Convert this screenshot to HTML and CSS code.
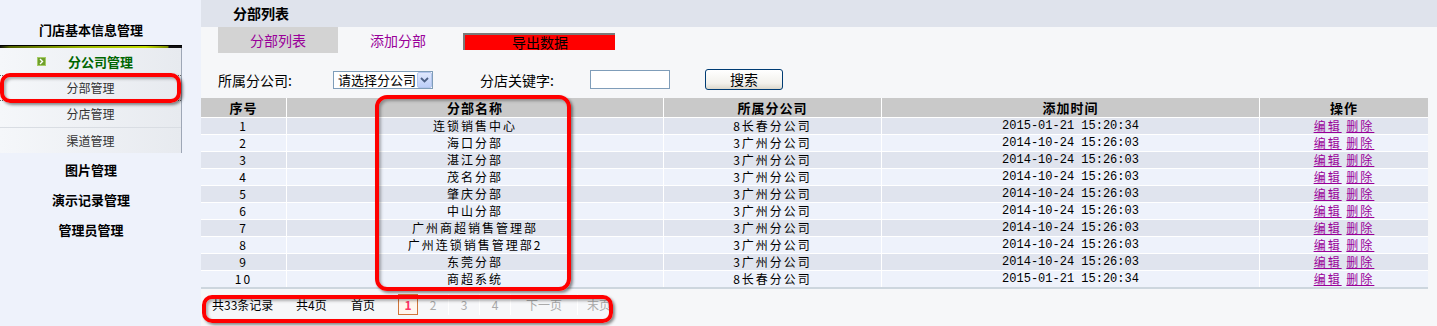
FILE: index.html
```html
<!DOCTYPE html>
<html lang="zh-CN">
<head>
    <meta charset="UTF-8">
    <title>分部列表</title>
    <link rel="stylesheet" href="styles.css">
</head>
<body>

    <!-- Left menu -->
    <aside class="sidebar">
        <div class="side-title">门店基本信息管理</div>
        <div class="side-line"></div>
        <div class="submenu">
            <div class="submenu-head">
                <svg class="head-icon" width="9" height="9" viewBox="0 0 9 9">
                    <rect x="0" y="0" width="9" height="9" fill="#6f9f2c"/>
                    <rect x="0.5" y="0.5" width="8" height="8" fill="none" stroke="#a6cc66"/>
                    <polyline points="3,2 5.5,4.5 3,7" fill="none" stroke="#fff" stroke-width="1.4"/>
                </svg>
                <span>分公司管理</span>
            </div>
            <a class="submenu-item active">分部管理</a>
            <a class="submenu-item">分店管理</a>
            <a class="submenu-item">渠道管理</a>
        </div>
        <div class="side-link">图片管理</div>
        <div class="side-link">演示记录管理</div>
        <div class="side-link">管理员管理</div>
    </aside>

    <main class="main">
        <div class="page-head">分部列表</div>

        <div class="tabs">
            <a class="tab current">分部列表</a>
            <a class="tab">添加分部</a>
            <span class="export-btn">导出数据</span>
        </div>

        <div class="filter">
            <span class="filter-label">所属分公司:</span>
            <div class="fake-select">
                <span>请选择分公司</span>
                <span class="select-arrow">
                    <svg width="9" height="6" viewBox="0 0 9 6"><polyline points="1,1 4.5,4.5 8,1" fill="none" stroke="#4d6185" stroke-width="1.8"/></svg>
                </span>
            </div>
            <span class="filter-label second">分店关键字:</span>
            <div class="text-input"></div>
            <button class="search-btn">搜索</button>
        </div>

        <div class="table-wrap">
            <table class="list">
                <colgroup>
                    <col style="width:86px">
                    <col style="width:377px">
                    <col style="width:218px">
                    <col style="width:378px">
                    <col>
                </colgroup>
                <thead>
                    <tr>
                        <th>序号</th>
                        <th>分部名称</th>
                        <th>所属分公司</th>
                        <th>添加时间</th>
                        <th>操作</th>
                    </tr>
                </thead>
                <tbody>
                    <tr><td>1</td><td>连锁销售中心</td><td>8长春分公司</td><td class="time">2015-01-21 15:20:34</td><td class="ops"><a>编辑</a> <a>删除</a></td></tr>
                    <tr><td>2</td><td>海口分部</td><td>3广州分公司</td><td class="time">2014-10-24 15:26:03</td><td class="ops"><a>编辑</a> <a>删除</a></td></tr>
                    <tr><td>3</td><td>湛江分部</td><td>3广州分公司</td><td class="time">2014-10-24 15:26:03</td><td class="ops"><a>编辑</a> <a>删除</a></td></tr>
                    <tr><td>4</td><td>茂名分部</td><td>3广州分公司</td><td class="time">2014-10-24 15:26:03</td><td class="ops"><a>编辑</a> <a>删除</a></td></tr>
                    <tr><td>5</td><td>肇庆分部</td><td>3广州分公司</td><td class="time">2014-10-24 15:26:03</td><td class="ops"><a>编辑</a> <a>删除</a></td></tr>
                    <tr><td>6</td><td>中山分部</td><td>3广州分公司</td><td class="time">2014-10-24 15:26:03</td><td class="ops"><a>编辑</a> <a>删除</a></td></tr>
                    <tr><td>7</td><td>广州商超销售管理部</td><td>3广州分公司</td><td class="time">2014-10-24 15:26:03</td><td class="ops"><a>编辑</a> <a>删除</a></td></tr>
                    <tr><td>8</td><td>广州连锁销售管理部2</td><td>3广州分公司</td><td class="time">2014-10-24 15:26:03</td><td class="ops"><a>编辑</a> <a>删除</a></td></tr>
                    <tr><td>9</td><td>东莞分部</td><td>3广州分公司</td><td class="time">2014-10-24 15:26:03</td><td class="ops"><a>编辑</a> <a>删除</a></td></tr>
                    <tr><td>10</td><td>商超系统</td><td>8长春分公司</td><td class="time">2015-01-21 15:20:34</td><td class="ops"><a>编辑</a> <a>删除</a></td></tr>
                </tbody>
            </table>
        </div>

        <!-- Pager -->
        <div class="pager">
            <span class="pg-info total">共33条记录</span>
            <span class="pg-info pages">共4页</span>
            <span class="pg-info first">首页</span>
            <span class="pg-current">1</span>
            <span class="pg-num">2</span>
            <span class="pg-num">3</span>
            <span class="pg-num">4</span>
            <span class="pg-num next">下一页</span>
            <span class="pg-num last">末页</span>
        </div>
    </main>

    <!-- red annotation marks -->
    <div class="mark mark-menu"></div>
    <div class="mark mark-column"></div>
    <div class="mark mark-pager"></div>

</body>
</html>
```

FILE: styles.css
```css
html, body {
    margin: 0;
    padding: 0;
    background-color: #f6f7f9;
}
body {
    display: flex;
    font-family: "Noto Sans CJK SC", sans-serif;
    font-size: 14px;
    color: #000;
    position: relative;
    min-height: 326px;
}

/* left menu */
.sidebar {
    width: 201px;
    flex-shrink: 0;
    background-color: #eef2fb;
    min-height: 326px;
}
.side-title {
    width: 182px;
    height: 45px;
    box-sizing: border-box;
    padding-top: 20px;
    line-height: 20px;
    text-align: center;
    font-size: 13px;
    font-weight: bold;
}
.side-line {
    width: 182px;
    height: 2px;
    border-top: 1px solid #000;
    background: linear-gradient(to right, #111 0, #4f6000 5%, #9cb800 45%, #c4dc00 80%, #7b8c00 92%, #111 93%, #111 100%);
}
.submenu {
    width: 182px;
    box-sizing: border-box;
    border-right: 1px solid #9ea7b6;
    background: linear-gradient(to right, #f5f7fa, #e7eaef);
}
.submenu-head {
    height: 27px;
    display: flex;
    align-items: center;
    padding-left: 37px;
    color: #006600;
    font-size: 13px;
    font-weight: bold;
}
.head-icon {
    margin-right: 22px;
}
.submenu-item {
    display: block;
    height: 25px;
    line-height: 25px;
    text-align: center;
    font-size: 12px;
    color: #333;
    border-top: 1px solid #d9dde3;
}
.submenu-item.active {
    border-top: 1px dotted #666;
    border-bottom: 1px dotted #666;
    height: 24px;
    line-height: 24px;
}
.submenu-item.active + .submenu-item {
    border-top: none;
    height: 26px;
    line-height: 26px;
}
.side-link {
    width: 182px;
    height: 30px;
    line-height: 30px;
    text-align: center;
    font-size: 13px;
    font-weight: bold;
}
.submenu + .side-link {
    margin-top: 2px;
}

/* main area */
.main {
    flex: 1;
}
.page-head {
    height: 27px;
    line-height: 27px;
    padding-left: 32px;
    background-color: #dfe3ec;
    font-weight: bold;
}
.tabs {
    display: flex;
    height: 26px;
    padding-left: 17px;
}
.tab {
    width: 120px;
    line-height: 26px;
    text-align: center;
    color: #990099;
}
.tab.current {
    background-color: #d3d3d3;
}
.export-btn {
    margin: 6px 0 0 5px;
    width: 152px;
    height: 17px;
    box-sizing: border-box;
    line-height: 15px;
    text-align: center;
    background-color: #ff0000;
    border-top: 2px solid #7a7a7a;
    border-left: 2px solid #7a7a7a;
}

.filter {
    display: flex;
    align-items: center;
    height: 21px;
    margin-top: 16px;
    padding-left: 17px;
}
.filter-label {
    width: 115px;
}
.filter-label.second {
    width: 110px;
    margin-left: 47px;
}
.fake-select {
    width: 100px;
    height: 18px;
    box-sizing: border-box;
    border: 1px solid #7f9db9;
    background-color: #fff;
    display: flex;
    align-items: center;
    justify-content: space-between;
    padding-left: 4px;
    font-size: 13px;
    line-height: 16px;
    white-space: nowrap;
}
.select-arrow {
    width: 15px;
    height: 16px;
    flex-shrink: 0;
    box-sizing: border-box;
    border: 1px solid #b3c5ec;
    border-radius: 2px;
    background: linear-gradient(#dfe8fd, #bccef8);
    display: flex;
    align-items: center;
    justify-content: center;
}
.text-input {
    width: 80px;
    height: 19px;
    box-sizing: border-box;
    border: 1px solid #7f9db9;
    background-color: #fff;
}
.search-btn {
    margin-left: 35px;
    width: 78px;
    height: 21px;
    padding: 0;
    border: 1px solid #003c74;
    border-radius: 3px;
    background: linear-gradient(#ffffff, #f2f1ec 70%, #dcd8cc);
    font-family: "Noto Sans CJK SC", sans-serif;
    font-size: 14px;
    line-height: 19px;
}

/* list table */
.table-wrap {
    margin-top: 8px;
    padding-right: 9px;
}
table.list {
    width: 100%;
    border-collapse: separate;
    border-spacing: 0;
    table-layout: fixed;
    border-bottom: 2px solid #cdd6de;
}
.list th, .list td {
    padding: 0;
    text-align: center;
    border-right: 1px solid #fff;
    border-bottom: 1px solid #fff;
    white-space: nowrap;
}
.list th:last-child, .list td:last-child {
    border-right: none;
}
.list th {
    background-color: #c9c9c9;
    font-size: 13px;
    letter-spacing: 1px;
    line-height: 19px;
}
.list td {
    font-size: 12px;
    letter-spacing: 2px;
    line-height: 16px;
}
.list tbody tr:nth-child(odd) td {
    background-color: #e0e4ee;
}
.list tbody tr:nth-child(even) td {
    background-color: #eef2fb;
}
.list tbody tr:last-child td {
    border-bottom: none;
}
.list td.time {
    font-family: "Liberation Mono", monospace;
    font-size: 12px;
    letter-spacing: 0;
}
.ops a {
    color: #990099;
    text-decoration: underline;
}

/* pager */
.pager {
    display: flex;
    align-items: center;
    height: 21px;
    margin-top: 5px;
    padding-left: 11px;
    font-size: 12px;
}
.pg-info.total { width: 84px; }
.pg-info.pages { width: 55px; }
.pg-info.first { width: 47px; }
.pg-current {
    width: 20px;
    height: 21px;
    box-sizing: border-box;
    border: 1px solid #d0753a;
    background-color: #fff6ee;
    color: #ff3366;
    font-weight: bold;
    line-height: 19px;
    text-align: center;
}
.pg-num {
    width: 30px;
    line-height: 21px;
    text-align: center;
    color: #aaa;
    border-right: 1px solid #fff;
}
.pg-num.next { width: 66px; }
.pg-num.last { width: 42px; border-right: none; }

/* red annotation marks on top of the screenshot */
.mark {
    position: absolute;
    box-sizing: border-box;
    border: 4px solid #ff0000;
    border-radius: 10px;
    box-shadow: 2px 2px 3px rgba(0, 0, 0, 0.45), inset 2px 2px 3px rgba(0, 0, 0, 0.3);
}
.mark-menu {
    left: 0;
    top: 73px;
    width: 181px;
    height: 30px;
}
.mark-column {
    left: 375px;
    top: 95px;
    width: 196px;
    height: 196px;
    border-radius: 12px;
}
.mark-pager {
    left: 202px;
    top: 295px;
    width: 411px;
    height: 28px;
}
```
